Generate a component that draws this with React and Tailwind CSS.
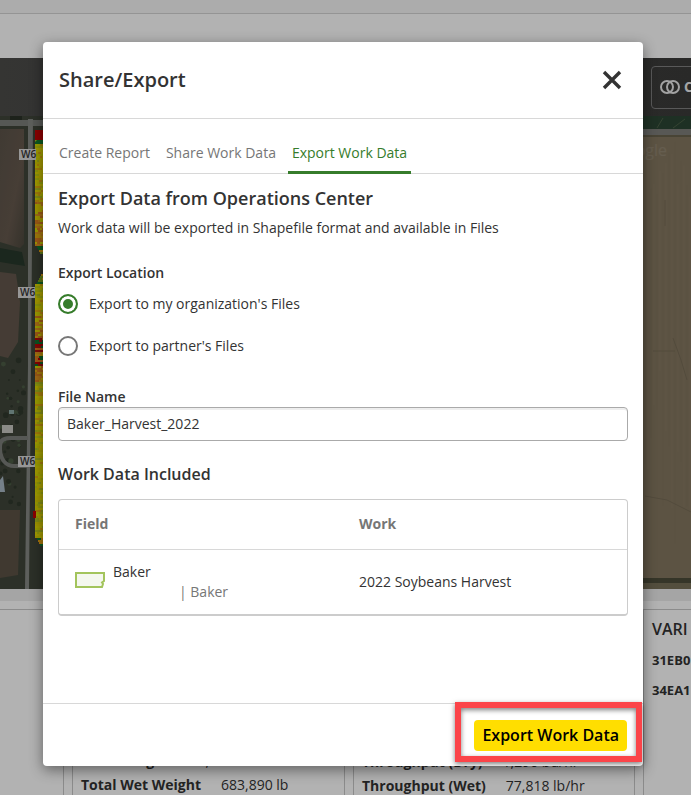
import { useState } from "react";
import { clsx } from "clsx";

const TABS = ["Create Report", "Share Work Data", "Export Work Data"];

const LOCATIONS = [
  { id: "organization", label: "Export to my organization's Files" },
  { id: "partner", label: "Export to partner's Files" },
];

const YIELD_COLORS = ["#e8e000", "#dce000", "#e8d800", "#c8d410", "#e8b010", "#e8e000", "#b8c820", "#e0d400"];
const HEAD_COLORS = ["#e8d800", "#e89820", "#e8b010", "#dce000", "#e08020"];
const LOW_COLORS = ["#c80000", "#b01010", "#107830", "#e88020"];
const EDGE_COLORS = ["#108030", "#80a820", "#f0a810"];

// rows of the harvest layer, seeded so that the map always looks the same
const noise = (n) => {
  const v = Math.sin(n * 127.1) * 43758.5453;
  return v - Math.floor(v);
};

const pickPalette = (y, low, nearEnd) => {
  if (low) return LOW_COLORS;
  if (nearEnd) return EDGE_COLORS;
  return (y > 80 && y < 130) || (y > 195 && y < 265) ? HEAD_COLORS : YIELD_COLORS;
};

const buildStrip = (top, bottom, lowRanges, tapered) => {
  const cells = [];
  for (let y = top; y < bottom; y += 2) {
    const low = lowRanges.some(([a, b]) => y >= a && y < b);
    const fromTop = tapered ? y - top : 99;
    const fromEnd = Math.min(fromTop, bottom - y);
    const nearEnd = fromEnd < 10;
    const inset = nearEnd ? Math.max(0, 6 - Math.floor(fromEnd / 2)) : 0;
    let x = inset;
    while (x < 10) {
      const width = 2 + Math.floor(noise(y * 5 + x) * 7);
      const palette = pickPalette(y, low, nearEnd);
      cells.push({ x, y, width, fill: palette[Math.floor(noise(y * 7 + x * 3 + 1) * palette.length)] });
      x += width;
    }
  }
  return cells;
};

const STRIPS = [
  ...buildStrip(14, 138, [], false),
  ...buildStrip(158, 430, [[222, 236], [240, 250]], true),
];

const Toolbar = () => (
  <div className="flex h-[58px] items-center justify-end bg-[#3f3f3c] bg-linear-to-r from-[#4c4c4a] via-[#434340] to-[#3c3c3a]">
    <button
      type="button"
      className="-mr-2 flex h-[43px] w-12 items-center gap-1 rounded border border-[#808080] pl-2 text-sm font-bold text-[#eeeeee]"
    >
      <svg viewBox="0 0 20 14" className="h-3.5 w-5 shrink-0" fill="none" stroke="#e8e8e8" strokeWidth="2">
        <circle cx="7" cy="7" r="6" />
        <circle cx="13" cy="7" r="6" />
      </svg>
      C
    </button>
  </div>
);

const RoadLabel = ({ className }) => (
  <span className={clsx("absolute bg-[#d8d8d8] pl-0.5 text-[10px] leading-[11px] font-semibold text-[#333333]", className)}>
    W6
  </span>
);

const FieldMap = () => (
  <div className="relative flex h-[473px] justify-between overflow-hidden bg-[#857861]">
    <svg viewBox="0 0 64 473" className="h-full w-16" aria-hidden="true">
      <defs>
        <linearGradient id="soil" x1="0" y1="0" x2="1" y2="1">
          <stop offset="0" stopColor="#5c544a" />
          <stop offset="0.6" stopColor="#66594e" />
          <stop offset="1" stopColor="#4c483e" />
        </linearGradient>
      </defs>
      <rect width="64" height="473" fill="#40463a" />
      <rect width="12" height="5" x="10" fill="#2a3228" />
      <rect width="64" height="6" y="4" fill="#7c7e7a" />
      <path d="M0 13H24V128L20 132L0 126Z" fill="url(#soil)" />
      <path d="M0 132L22 136L25 150L12 148L0 146Z" fill="#28382c" />
      <path d="M0 156L16 158L20 186L18 226L8 242L0 240Z" fill="#63574c" />
      <path d="M0 394H20L18 459L0 462Z" fill="#5c5246" />
      {Array.from({ length: 48 }, (_, i) => (
        <circle
          key={i}
          cx={noise(i + 3) * 25}
          cy={242 + noise(i + 70) * 148}
          r={1 + noise(i + 9) * 2}
          fill={i % 4 === 0 ? "#4c5c46" : "#30392d"}
        />
      ))}
      <path d="M28 3H33L31 250L29 473H25L28 250Z" fill="#868884" />
      <path d="M28 322H10C3 322 0 325 0 330V334C1 344 6 350 14 350H27" fill="none" stroke="#7c7e7a" strokeWidth="4" />
      <rect x="2" y="309" width="11" height="8" fill="#c8c8c2" />
      <rect x="9" y="294" width="5" height="4" fill="#8ca8a4" />
      <path d="M0 364L3 360L5 376H0Z" fill="#a8b8c4" />
      <g transform="translate(35 0)">
        {STRIPS.map((c) => (
          <rect key={`${c.x}-${c.y}`} x={c.x} y={c.y} width={c.width} height="2" fill={c.fill} />
        ))}
        <path d="M0 14H9V26H3V24H0Z" fill="#c80000" />
        <path d="M2 24H9V28H0V26Z" fill="#108030" />
        <rect x="-2" y="395" width="3" height="7" fill="#c80000" />
      </g>
    </svg>
    <svg viewBox="0 0 64 473" className="h-full w-16" aria-hidden="true">
      <rect width="64" height="473" fill="#857861" />
      <rect width="64" height="13" fill="#2c4634" />
      <path d="M30 12L36 2M46 12L58 3" stroke="#4c6048" />
      <rect y="13" width="64" height="6" fill="#7e7f7a" />
      <path d="M0 20H64" stroke="#4c4c3a" />
      {Array.from({ length: 16 }, (_, i) => (
        <path
          key={i}
          d={`M${18 + i * 3} ${24 + noise(i) * 60}V${250 + noise(i + 5) * 190}`}
          stroke={i % 2 ? "#887b64" : "#81755e"}
        />
      ))}
      <path d="M46 222L54 244L60 264M38 84V110M26 235H48M18 380L40 384L64 396" fill="none" stroke="#776c57" />
      <rect y="462" width="64" height="5" fill="#4c4c3a" />
      <rect y="467" width="64" height="6" fill="#787058" />
    </svg>
    <RoadLabel className="top-[33px] left-[19px]" />
    <RoadLabel className="top-[171px] left-[18px]" />
    <RoadLabel className="top-[340px] left-[18px]" />
    <span className="absolute top-6 right-6 text-base leading-5 text-white/10">Google</span>
  </div>
);

const Stat = ({ label, value }) => (
  <div className="flex gap-5">
    <dt className="font-bold">{label}</dt>
    <dd>{value}</dd>
  </div>
);

const Summary = () => (
  <div className="border-t-12 border-[#ececec] pt-2">
    <div className="grid h-72 grid-cols-[64px_273fr_282fr_48px] gap-x-2 text-sm leading-6 whitespace-nowrap text-[#333333]">
      <section className="border-t border-r border-[#c8c8c8]" />
      <section className="overflow-hidden border border-[#c8c8c8] pt-[139px] pl-2">
        <dl>
          <Stat label="Total Weight" value="11,398 bu" />
          <Stat label="Total Wet Weight" value="683,890 lb" />
        </dl>
      </section>
      <section className="overflow-hidden border border-[#c8c8c8] pt-[140px] pl-2">
        <dl>
          <Stat label="Throughput (Dry)" value="1,290 bu/hr" />
          <Stat label="Throughput (Wet)" value="77,818 lb/hr" />
        </dl>
      </section>
      <section className="border-t border-l border-[#c8c8c8] pt-[7px] pl-2">
        <h2 className="text-base leading-6 font-semibold">VARI</h2>
        <ul className="mt-1 text-[13px] leading-[30px] font-bold">
          <li>31EB0</li>
          <li>34EA1</li>
        </ul>
      </section>
    </div>
  </div>
);

const ExportForm = () => {
  const [location, setLocation] = useState("organization");
  const [fileName, setFileName] = useState("Baker_Harvest_2022");

  return (
    <div className="px-[15px] pt-3 pb-[87px]">
      <h2 className="text-lg leading-6 font-semibold">Export Data from Operations Center</h2>
      <p className="mt-2 text-sm leading-5">Work data will be exported in Shapefile format and available in Files</p>

      <fieldset className="mt-[25px]">
        <legend className="text-sm leading-5 font-semibold">Export Location</legend>
        <div className="mt-[11px] flex flex-col gap-[22px]">
          {LOCATIONS.map((item) => (
            <label key={item.id} className="flex items-center gap-[11px] text-sm leading-5">
              <input
                type="radio"
                name="location"
                checked={location === item.id}
                onChange={() => setLocation(item.id)}
                className="size-5 appearance-none rounded-full border-2 border-[#777777] checked:border-[#367c2b] checked:bg-[#367c2b] checked:shadow-[inset_0_0_0_3px_white]"
              />
              {item.label}
            </label>
          ))}
        </div>
      </fieldset>

      <label htmlFor="file-name" className="mt-[31px] block text-sm leading-5 font-semibold">
        File Name
      </label>
      <input
        id="file-name"
        type="text"
        value={fileName}
        onChange={(e) => setFileName(e.target.value)}
        className="block h-[34px] w-full rounded border border-[#aaaaaa] px-2 pb-0.5 text-sm shadow-[inset_0_2px_0_#eeeeee]"
      />

      <h3 className="mt-[21px] text-base leading-6 font-semibold">Work Data Included</h3>
      <div className="mt-[13px] rounded border border-b-2 border-[#cccccc]">
        <table className="w-full table-fixed text-left text-sm leading-5">
          <thead className="text-[#767676]">
            <tr className="h-[49px] border-b border-[#d8d8d8]">
              <th className="px-4 font-bold">Field</th>
              <th className="px-4 font-bold">Work</th>
            </tr>
          </thead>
          <tbody>
            <tr>
              <td className="px-4 py-3">
                <div className="flex items-center gap-2">
                  <svg viewBox="0 0 30 16" className="mb-1 h-4 w-[30px]" fill="#f4f7ee" stroke="#a3c45c" strokeWidth="2">
                    <path d="M1 1H29V9L27 10.500L28 12L27 15H1Z" />
                  </svg>
                  <div>
                    <div>Baker</div>
                    <div className="pl-[66px] text-[#767676]">| Baker</div>
                  </div>
                </div>
              </td>
              <td className="px-4 py-3">2022 Soybeans Harvest</td>
            </tr>
          </tbody>
        </table>
      </div>
    </div>
  );
};

const ShareDialog = () => {
  const [tab, setTab] = useState("Export Work Data");

  return (
    <div
      role="dialog"
      aria-label="Share/Export"
      className="w-full max-w-[600px] rounded bg-white text-[#333333] shadow-[0_4px_14px_rgba(0,0,0,0.45)]"
    >
      <header className="flex h-[77px] items-center justify-between border-b border-[#d8d8d8] px-4">
        <h1 className="text-xl font-semibold">Share/Export</h1>
        <button type="button" aria-label="Close" className="py-1.5 pr-[5px] pl-1.5">
          <svg viewBox="0 0 20 20" className="size-5" stroke="#333333" strokeWidth="3.4">
            <path d="M2 2L18 18M18 2L2 18" />
          </svg>
        </button>
      </header>

      <div role="tablist" className="flex h-[55px] items-end gap-2 border-b border-[#d8d8d8] px-3">
        {TABS.map((name) => (
          <button
            key={name}
            type="button"
            role="tab"
            aria-selected={tab === name}
            onClick={() => setTab(name)}
            className={clsx(
              "-mb-px border-b-3 px-1 pb-2 text-sm leading-5",
              tab === name ? "border-[#367c2b] text-[#367c2b]" : "border-transparent text-[#767676]"
            )}
          >
            {name}
          </button>
        ))}
      </div>

      <ExportForm />

      <footer className="flex justify-end border-t border-[#d8d8d8] px-4 pt-4 pb-[15px]">
        <div className="relative">
          <button type="button" className="block h-[31px] rounded bg-[#ffde00] px-2 text-base leading-6 font-semibold text-black">
            Export Work Data
          </button>
          <div className="pointer-events-none absolute -top-[18px] -right-[15px] -bottom-[11px] -left-[19px] border-6 border-[#fb4449] shadow-[0_2px_5px_rgba(0,0,0,0.5),inset_0_2px_5px_rgba(0,0,0,0.5)]" />
        </div>
      </footer>
    </div>
  );
};

const App = () => {
  return (
    <div className="relative h-screen overflow-hidden bg-white font-['Open_Sans','Noto_Sans',sans-serif]">
      <div className="h-3.5 border-b border-[#d4d4d4] bg-[#f7f7f7]" />
      <div className="h-11" />
      <Toolbar />
      <FieldMap />
      <Summary />

      <div className="absolute inset-0 flex items-start justify-center bg-black/30 pt-[42px] pr-[5px]">
        <ShareDialog />
      </div>
    </div>
  );
};

export default App;
